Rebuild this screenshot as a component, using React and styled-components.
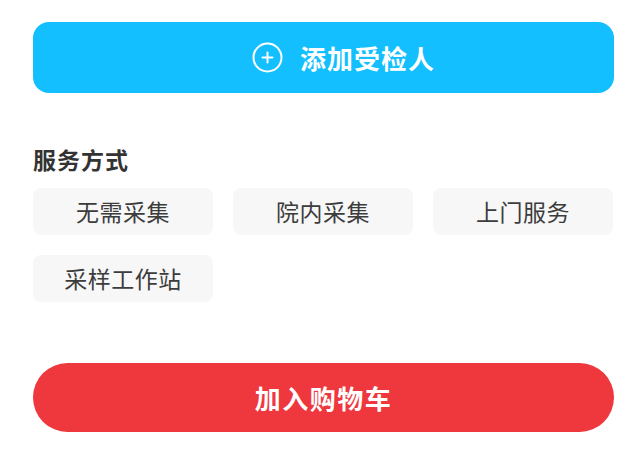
import React from 'react'
import styled, { createGlobalStyle } from 'styled-components'

const GlobalStyle = createGlobalStyle`
  body {
    margin: 0;
    background: #fff;
    font-family: "Noto Sans CJK SC", "Noto Sans", sans-serif;
  }
`

const Page = styled.div`
  width: 581px;
  padding: 22px 15px 38px 33px;
`

const AddButton = styled.button`
  width: 100%;
  height: 71px;
  border: none;
  border-radius: 16px;
  background: #13bffe;
  color: #fff;
  display: flex;
  align-items: center;
  justify-content: center;
  gap: 17px;
  padding: 0 0 0 40px;
  font-family: inherit;
  font-size: 26px;
  font-weight: 700;
  letter-spacing: 1px;
  line-height: 1;
`

const Section = styled.section`
  margin-top: 55px;
`

const Label = styled.h4`
  margin: 0;
  font-size: 23px;
  line-height: 23px;
  font-weight: 700;
  letter-spacing: 1px;
  color: #333;
`

const Options = styled.div`
  margin-top: 17px;
  display: grid;
  grid-template-columns: repeat(3, 180px);
  gap: 20px;
`

const Option = styled.div`
  height: 47px;
  border-radius: 8px;
  background: ${(p) => (p.active ? '#e6f8ff' : '#f7f7f7')};
  color: #3c3c3c;
  display: flex;
  align-items: center;
  justify-content: center;
  font-size: 23px;
  letter-spacing: 0.5px;
  line-height: 1;
`

const CartButton = styled.button`
  margin-top: 61px;
  width: 100%;
  height: 69px;
  border: none;
  border-radius: 35px;
  background: #ef373e;
  color: #fff;
  font-family: inherit;
  font-size: 26px;
  font-weight: 700;
  letter-spacing: 1.5px;
  line-height: 1;
`

const PlusIcon = () => (
  <svg width="31" height="31" viewBox="0 0 31 31" fill="none">
    <circle cx="15.5" cy="15.5" r="14" stroke="#fff" strokeWidth="2" />
    <path d="M15.5 10.5v10M10.5 15.5h10" stroke="#fff" strokeWidth="2" strokeLinecap="round" />
  </svg>
)

const services = ['无需采集', '院内采集', '上门服务', '采样工作站']

export default function App() {
  return (
    <Page>
      <GlobalStyle />
      <AddButton>
        <PlusIcon />
        <span>添加受检人</span>
      </AddButton>
      <Section>
        <Label>服务方式</Label>
        <Options>
          {services.map((s) => (
            <Option key={s}>{s}</Option>
          ))}
        </Options>
      </Section>
      <CartButton>加入购物车</CartButton>
    </Page>
  )
}
